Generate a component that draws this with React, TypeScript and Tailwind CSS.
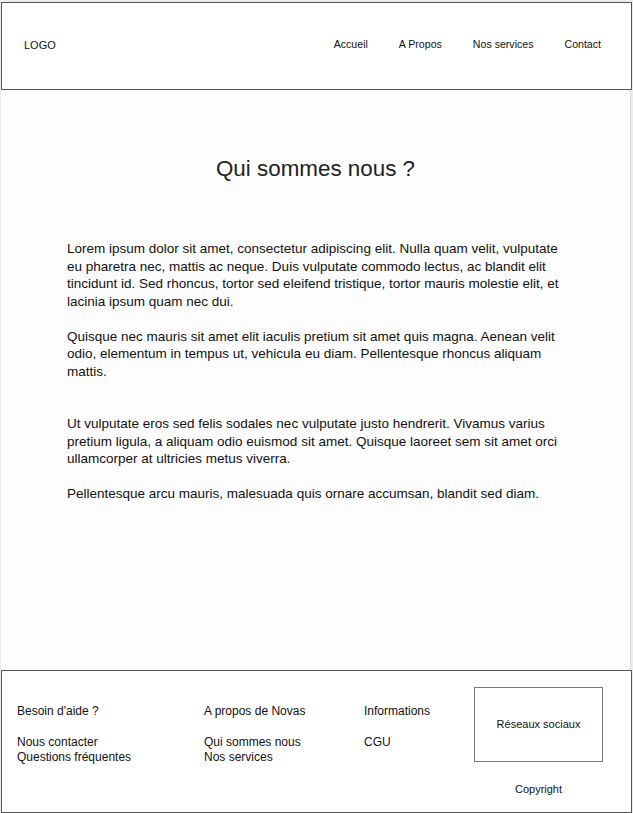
import React from "react";

const navLinks = ["Accueil", "A Propos", "Nos services", "Contact"];

const paragraphs = [
  "Lorem ipsum dolor sit amet, consectetur adipiscing elit. Nulla quam velit, vulputate eu pharetra nec, mattis ac neque. Duis vulputate commodo lectus, ac blandit elit tincidunt id. Sed rhoncus, tortor sed eleifend tristique, tortor mauris molestie elit, et lacinia ipsum quam nec dui.",
  "Quisque nec mauris sit amet elit iaculis pretium sit amet quis magna. Aenean velit odio, elementum in tempus ut, vehicula eu diam. Pellentesque rhoncus aliquam mattis.",
  "Ut vulputate eros sed felis sodales nec vulputate justo hendrerit. Vivamus varius pretium ligula, a aliquam odio euismod sit amet. Quisque laoreet sem sit amet orci ullamcorper at ultricies metus viverra.",
  "Pellentesque arcu mauris, malesuada quis ornare accumsan, blandit sed diam.",
];

const App = () => {
  return (
    <div className="w-[633px] h-[813px] bg-[#ececec] font-['Liberation_Sans',Arial,sans-serif] text-[#111] flex flex-col pt-[2px] pl-[1px] pr-[1px] overflow-hidden">
      {/* header */}
      <header className="h-[88px] shrink-0 bg-white border border-[#555] flex items-center px-[22px] text-[11px] pb-[2px]">
        <span>LOGO</span>
        <nav className="ml-auto flex gap-[31px] pr-[8px] text-[10.6px]">
          {navLinks.map((l) => (
            <a key={l}>{l}</a>
          ))}
        </nav>
      </header>

      {/* main */}
      <main className="flex-1 bg-[#fdfdfd] border-r border-[#dcdcdc] mr-[1px] flex flex-col">
        <h1 className="mt-[68px] text-[22.4px] text-[#222] leading-none text-center">Qui sommes nous ?</h1>
        <div className="mt-[60px] ml-[66px] w-[500px] text-[13.5px] leading-[17.5px]">
          <p>{paragraphs[0]}</p>
          <p className="mt-[17.5px]">{paragraphs[1]}</p>
          <p className="mt-[35px]">{paragraphs[2]}</p>
          <p className="mt-[17.5px]">{paragraphs[3]}</p>
        </div>
      </main>

      {/* footer */}
      <footer className="h-[143px] shrink-0 bg-white border border-[#555] flex text-[12px] leading-[15px] pl-[15px] pt-[33px]">
        <div className="w-[187px]">
          <p>Besoin d'aide ?</p>
          <p className="mt-[16px]">Nous contacter</p>
          <p>Questions fréquentes</p>
        </div>
        <div className="w-[160px]">
          <p>A propos de Novas</p>
          <p className="mt-[16px]">Qui sommes nous</p>
          <p>Nos services</p>
        </div>
        <div className="w-[110px]">
          <p>Informations</p>
          <p className="mt-[16px]">CGU</p>
        </div>
        <div className="flex flex-col items-center -mt-[17px]">
          <div className="w-[129px] h-[75px] border border-[#777] flex items-center justify-center text-[11px]">
            Réseaux sociaux
          </div>
          <p className="mt-[20px] text-[11px]">Copyright</p>
        </div>
      </footer>
    </div>
  );
};

export default App;
